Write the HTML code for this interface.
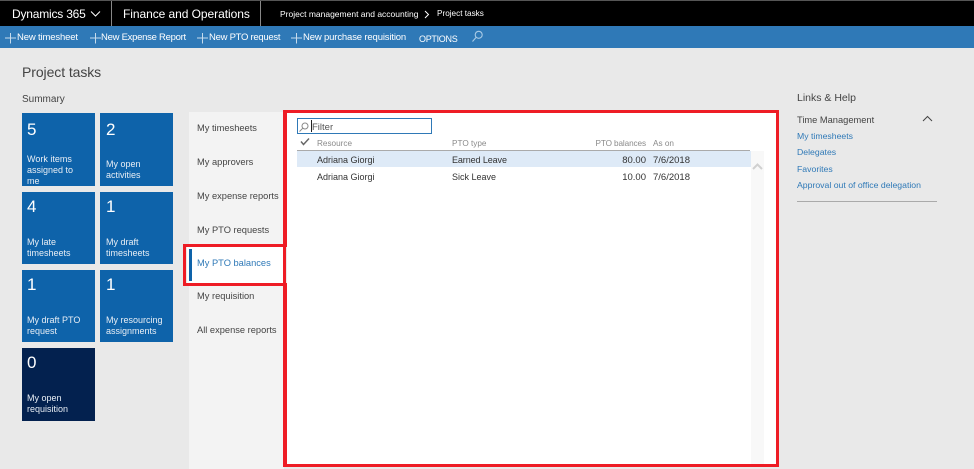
<!DOCTYPE html>
<html>
<head>
<meta charset="utf-8">
<style>
html,body{margin:0;padding:0;}
body{width:974px;height:469px;overflow:hidden;background:#e9e9e9;position:relative;font-family:"Liberation Sans",sans-serif;}
div,span{position:absolute;white-space:nowrap;}
.b{background:#000;left:0;top:0;width:974px;height:26px;border-top:1px solid #555;box-sizing:border-box;}
.sep{top:1px;width:1px;height:25px;background:#888;}
.w{color:#fff;}
.cmd{left:0;top:26px;width:974px;height:22px;background:#2f79b7;}
.c{color:#fff;font-size:9.5px;letter-spacing:-.15px;top:32px;line-height:12px;}
.t{width:73px;background:#0e63aa;color:#fff;overflow:hidden;}
.n{font-size:17px;left:5px;top:6px;line-height:22px;color:#fff;}
.l{font-size:9px;line-height:11px;left:5px;bottom:5px;color:#e8eef5;}
.nav{font-size:9.3px;color:#444;left:197px;line-height:12px;}
.g{font-size:9px;color:#333;line-height:12px;}
.d{font-size:9.5px;}
.h{font-size:8.2px;color:#8a8a8a;line-height:12px;top:138px;}
.lk{font-size:8.7px;color:#2f79b7;left:797px;line-height:11px;}
.r{background:#ee1c25;}
</style>
</head>
<body>
<div class="b"></div>
<div class="w" style="left:12px;top:6px;font-size:12px;letter-spacing:-.2px;line-height:16px;">Dynamics 365</div>
<svg style="position:absolute;left:90px;top:10px" width="12" height="8"><path d="M1 1.5 L5.5 6 L10 1.5" fill="none" stroke="#fff" stroke-width="1"/></svg>
<div class="sep" style="left:111px"></div>
<div class="w" style="left:123px;top:6px;font-size:12px;letter-spacing:-.06px;line-height:16px;">Finance and Operations</div>
<div class="sep" style="left:260px"></div>
<div class="w" style="left:280px;top:8px;font-size:8.5px;line-height:12px;">Project management and accounting</div>
<svg style="position:absolute;left:424px;top:10px" width="6" height="9"><path d="M1 1 L4.5 4.5 L1 8" fill="none" stroke="#fff" stroke-width="1"/></svg>
<div class="w" style="left:437px;top:8px;font-size:8.2px;line-height:12px;">Project tasks</div>

<div class="cmd"></div>
<svg style="position:absolute;left:0;top:26px" width="310" height="22" fill="none" stroke="#c6dbec" stroke-width="1">
<path d="M5 12 H16 M10.5 7 V17.5"/><path d="M90 12 H101 M95.5 7 V17.5"/><path d="M197 12 H208 M202.5 7 V17.5"/><path d="M291 12 H302 M296.5 7 V17.5"/>
</svg>
<div class="c" style="left:17px;">New timesheet</div>
<div class="c" style="left:101px;letter-spacing:-.27px;">New Expense Report</div>
<div class="c" style="left:209px;letter-spacing:-.27px;">New PTO request</div>
<div class="c" style="left:303px;">New purchase requisition</div>
<div class="c" style="left:419px;top:33px;font-size:9px;letter-spacing:-.3px;">OPTIONS</div>
<svg style="position:absolute;left:471px;top:30px" width="13" height="13" fill="none" stroke="#a9cbe6" stroke-width="1.1"><circle cx="7.7" cy="4.8" r="3.5"/><path d="M5.2 7.3 L1.5 11.5"/></svg>

<div style="left:22px;top:63px;font-size:14px;letter-spacing:-.08px;line-height:18px;color:#444;">Project tasks</div>
<div style="left:22px;top:93px;font-size:10px;line-height:13px;color:#444;">Summary</div>

<div class="t" style="left:22px;top:113px;height:73px;"><div class="n">5</div><div class="l" style="bottom:-1px;">Work items<br>assigned to<br>me</div></div>
<div class="t" style="left:100px;top:113px;height:73px;"><div class="n" style="left:6px">2</div><div class="l" style="left:6px;">My open<br>activities</div></div>
<div class="t" style="left:22px;top:192px;height:72px;"><div class="n" style="top:4px">4</div><div class="l">My late<br>timesheets</div></div>
<div class="t" style="left:100px;top:192px;height:72px;"><div class="n" style="top:4px;left:6px">1</div><div class="l" style="left:6px;">My draft<br>timesheets</div></div>
<div class="t" style="left:22px;top:270px;height:72px;"><div class="n" style="top:4px">1</div><div class="l">My draft PTO<br>request</div></div>
<div class="t" style="left:100px;top:270px;height:72px;"><div class="n" style="top:4px;left:6px">1</div><div class="l" style="left:6px;">My resourcing<br>assignments</div></div>
<div class="t" style="left:22px;top:348px;height:73px;background:#03214f;"><div class="n" style="top:4px">0</div><div class="l" style="bottom:6px;">My open<br>requisition</div></div>

<div style="left:189px;top:112px;width:95px;height:357px;background:#f3f3f3;"></div>
<div style="left:187px;top:247px;width:96px;height:36px;background:#fff;"></div>
<div style="left:189px;top:249px;width:3px;height:32px;background:#0e63aa;"></div>
<div class="nav" style="top:122px;">My timesheets</div>
<div class="nav" style="top:156px;">My approvers</div>
<div class="nav" style="top:190px;">My expense reports</div>
<div class="nav" style="top:224px;">My PTO requests</div>
<div class="nav" style="top:257px;color:#2f79b7;">My PTO balances</div>
<div class="nav" style="top:290px;">My requisition</div>
<div class="nav" style="top:324px;">All expense reports</div>

<div style="left:287px;top:113px;width:489px;height:351px;background:#fff;"></div>
<div style="left:297px;top:118px;width:135px;height:16px;border:1px solid #2f79b7;box-sizing:border-box;background:#fff;"></div>
<svg style="position:absolute;left:298px;top:121px" width="12" height="12" fill="none" stroke="#888" stroke-width="1"><circle cx="7" cy="5" r="3"/><path d="M4.8 7.2 L1.5 10.5"/></svg>
<div style="left:311px;top:120px;width:1px;height:12px;background:#222;"></div>
<div style="left:312px;top:122px;font-size:9.5px;line-height:12px;color:#555;">Filter</div>
<svg style="position:absolute;left:300px;top:137px" width="10" height="9"><path d="M1 4.5 L3.5 7.5 L9 1.5" fill="none" stroke="#666" stroke-width="1.4"/></svg>
<div class="h" style="left:317px;">Resource</div>
<div class="h" style="left:452px;">PTO type</div>
<div class="h" style="left:586px;width:60px;text-align:right;letter-spacing:-.1px;">PTO balances</div>
<div class="h" style="left:653px;">As on</div>
<div style="left:297px;top:150px;width:453px;height:1px;background:#aaa;"></div>
<div style="left:297px;top:151px;width:454px;height:16px;background:#deeaf7;"></div>
<div class="g" style="left:317px;top:154px;">Adriana Giorgi</div>
<div class="g" style="left:452px;top:154px;letter-spacing:-.1px;">Earned Leave</div>
<div class="g d" style="left:586px;width:60px;text-align:right;top:155px;">80.00</div>
<div class="g d" style="left:653px;top:155px;">7/6/2018</div>
<div class="g" style="left:317px;top:171px;">Adriana Giorgi</div>
<div class="g" style="left:452px;top:171px;">Sick Leave</div>
<div class="g d" style="left:586px;width:60px;text-align:right;top:172px;">10.00</div>
<div class="g d" style="left:653px;top:172px;">7/6/2018</div>
<div style="left:751px;top:151px;width:13px;height:313px;background:#f8f8f8;"></div>
<svg style="position:absolute;left:752px;top:163px" width="11" height="8"><path d="M1 6 L5.5 1.5 L10 6" fill="none" stroke="#d0d0d0" stroke-width="2"/></svg>

<div class="r" style="left:283px;top:110px;width:496px;height:3px;"></div>
<div class="r" style="left:283px;top:110px;width:4px;height:135px;"></div>
<div class="r" style="left:283px;top:285px;width:4px;height:182px;"></div>
<div class="r" style="left:776px;top:110px;width:3px;height:357px;"></div>
<div class="r" style="left:283px;top:464px;width:496px;height:3px;"></div>
<div class="r" style="left:183px;top:244px;width:104px;height:3px;"></div>
<div class="r" style="left:183px;top:283px;width:104px;height:3px;"></div>
<div class="r" style="left:183px;top:244px;width:3px;height:42px;"></div>
<div class="r" style="left:283px;top:244px;width:3px;height:42px;"></div>

<div style="left:797px;top:92px;font-size:10.5px;line-height:13px;color:#444;">Links &amp; Help</div>
<div style="left:797px;top:114px;font-size:9.3px;line-height:12px;color:#444;">Time Management</div>
<svg style="position:absolute;left:922px;top:115px" width="11" height="7"><path d="M1 6 L5.5 1.5 L10 6" fill="none" stroke="#444" stroke-width="1"/></svg>
<div class="lk" style="top:131px;">My timesheets</div>
<div class="lk" style="top:147px;">Delegates</div>
<div class="lk" style="top:164px;">Favorites</div>
<div class="lk" style="top:180px;">Approval out of office delegation</div>
<div style="left:797px;top:201px;width:140px;height:1px;background:#aaa;"></div>
</body>
</html>
